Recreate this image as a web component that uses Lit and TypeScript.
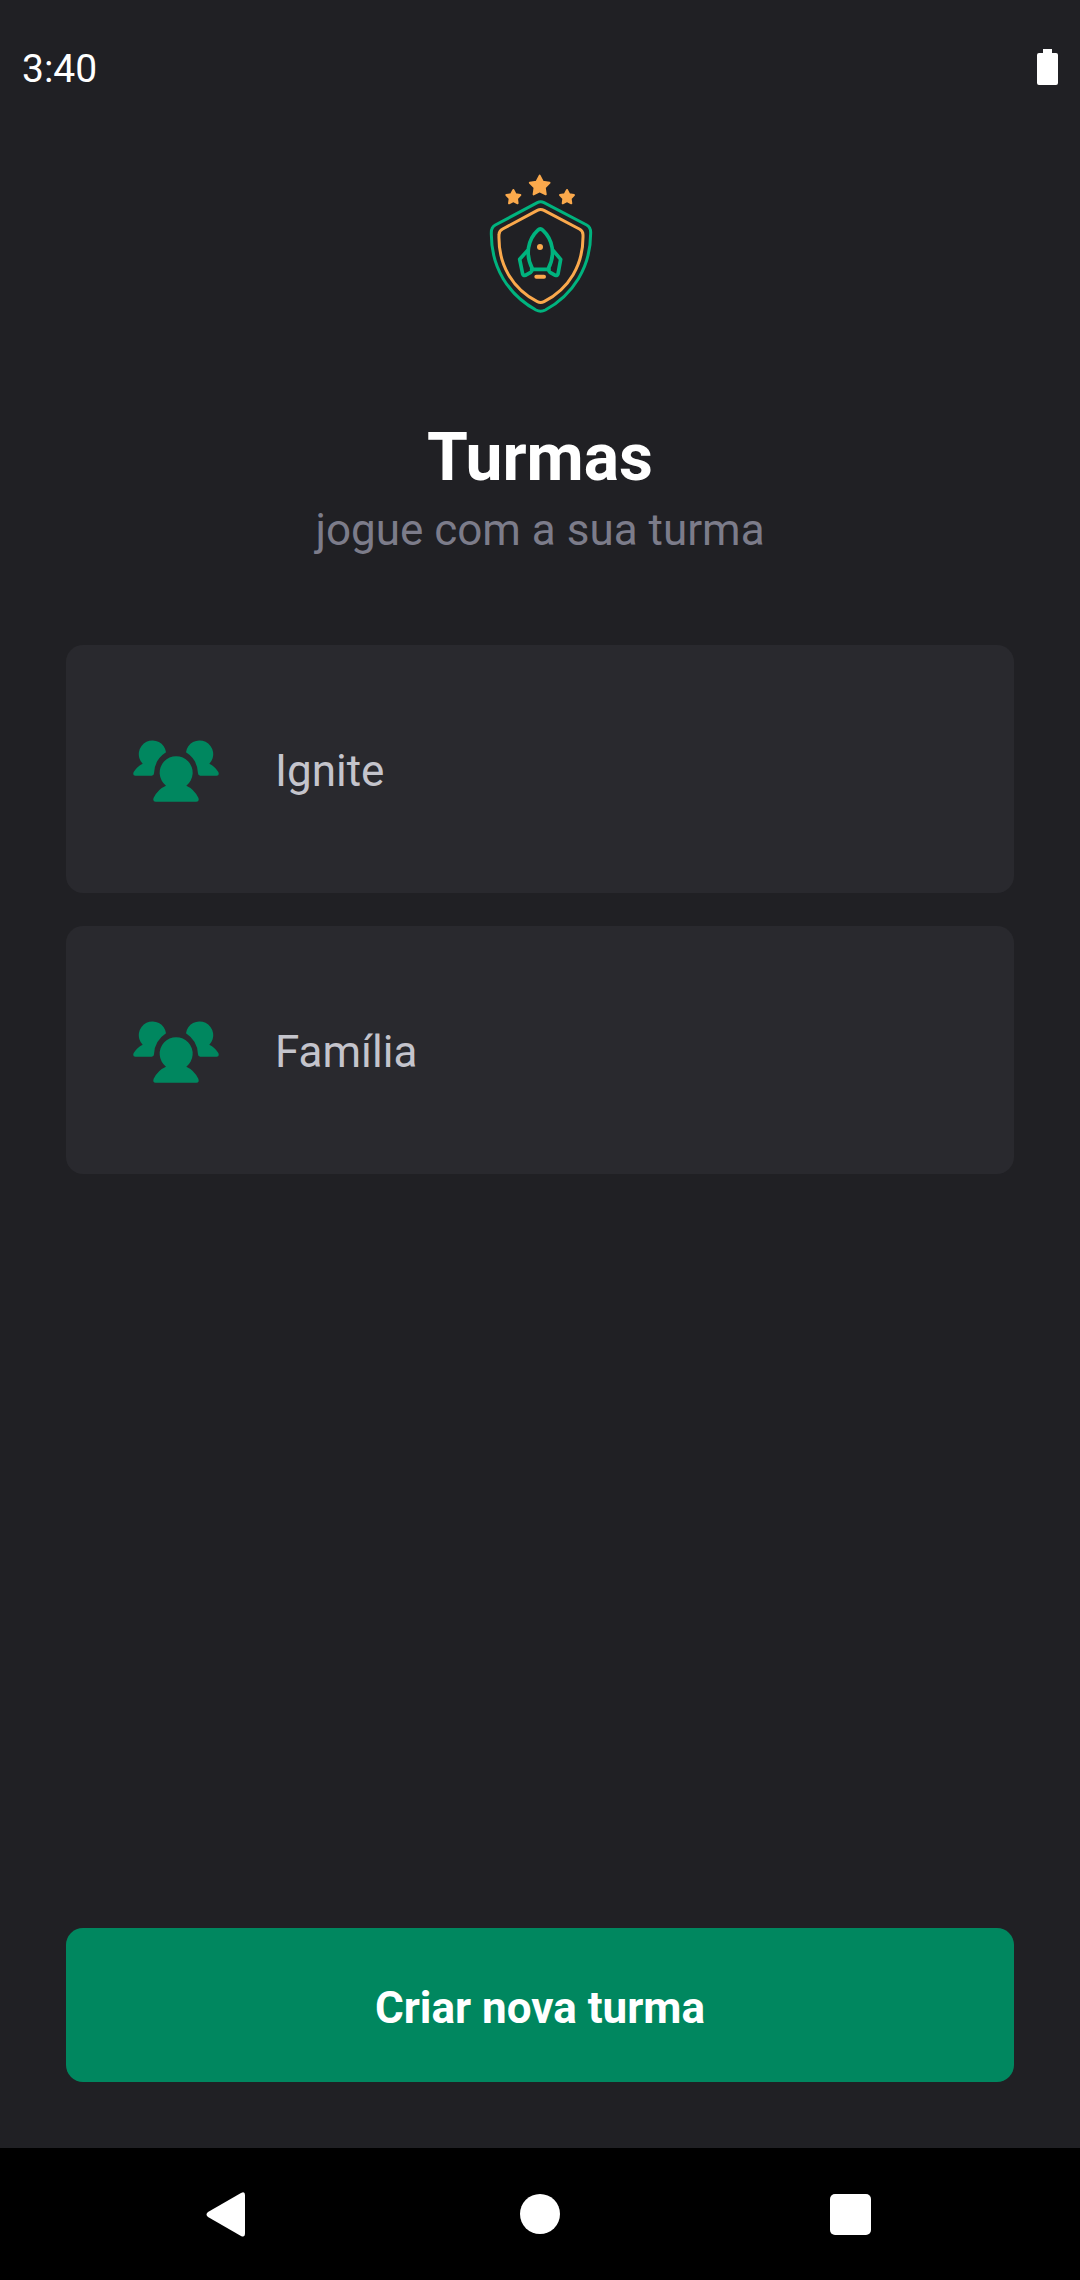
import { LitElement, html, css, svg } from "lit";
import { customElement, property, state } from "lit/decorators.js";

const star = (cx: number, cy: number, r: number) => {
  const points = Array.from({ length: 10 }, (_, i) => {
    const radius = i % 2 ? r * 0.52 : r;
    const angle = (Math.PI * i) / 5 - Math.PI / 2;
    return `${(cx + radius * Math.cos(angle)).toFixed(1)},${(cy + radius * Math.sin(angle)).toFixed(1)}`;
  }).join(" ");
  return svg`<polygon points=${points} fill="#fba94c" stroke="#fba94c" stroke-width="6" stroke-linejoin="round"></polygon>`;
};

@customElement("team-crest")
class TeamCrest extends LitElement {
  static styles = css`
    :host { display: block; }
    .crest { display: block; width: 140px; height: 165px; }
  `;

  render() {
    return html`
      <svg class="crest" viewBox="0 0 420 495" fill="none" stroke-linecap="round" stroke-linejoin="round" aria-hidden="true">
        ${star(209, 78, 31)} ${star(130, 112, 22)} ${star(291, 112, 22)}
        <path stroke="#00b37e" stroke-width="9" d="M202 128Q212 123 222 128L350 195Q362 202 362 217C363 322 308 405 226 450Q212 457 198 450C116 405 62 322 64 217Q64 202 76 195Z"/>
        <path stroke="#fba94c" stroke-width="9" d="M202 151Q212 146 222 151L328 207Q339 213 339 224C341 315 297 386 222 425Q212 430 202 425C128 386 84 315 87 224Q87 213 98 207Z"/>
        <g stroke="#00b37e" stroke-width="11">
          <path d="M203 211Q211 203 219 211C248 238 258 284 234 328H188C164 284 174 238 203 211Z"/>
          <path d="M172 272L149 298L158 342Q160 348 166 346L182 337Q187 333 185 328"/>
          <path d="M250 272L272 298L264 342Q262 348 256 346L240 337Q235 333 237 328"/>
        </g>
        <circle cx="210" cy="261" r="9" fill="#fba94c"/>
        <path stroke="#fba94c" stroke-width="12" d="M199 350H222"/>
      </svg>
    `;
  }
}

@customElement("group-card")
class GroupCard extends LitElement {
  @property() name = "";

  static styles = css`
    :host { display: block; }
    .card {
      display: flex;
      align-items: center;
      gap: 55px;
      width: 100%;
      min-height: 248px;
      padding: 0 66px;
      border: 0;
      border-radius: 17px;
      background: #29292e;
      color: #c4c4cc;
      font: 400 44px/60px Roboto, sans-serif;
      text-align: left;
      cursor: pointer;
    }
    .people { flex: none; width: 88px; height: 74px; fill: #00875f; }
    .name { padding-top: 4px; }
  `;

  render() {
    return html`
      <button class="card" type="button">
        <svg class="people" viewBox="36 37 264 222" aria-hidden="true">
          <path d="M138 198A49.500 49.500 0 1 1 199 198Q222 208 235 234Q239 246 229 246H107Q97 246 101 234Q114 208 138 198Z"/>
          <path d="M68 132A41 41 0 1 1 138 98Q103 121 102 161Q102 168 95 168H46Q37 168 41 157Q51 140 68 132Z"/>
          <path d="M268 132A41 41 0 1 0 198 98Q233 121 234 161Q234 168 241 168H290Q299 168 295 157Q285 140 268 132Z"/>
        </svg>
        <span class="name">${this.name}</span>
      </button>
    `;
  }
}

@customElement("app-root")
class AppRoot extends LitElement {
  @state() private groups = ["Ignite", "Família"];

  static styles = css`
    :host {
      display: flex;
      flex-direction: column;
      min-height: 100vh;
      background: #202024;
      color: #ffffff;
      font-family: Roboto, sans-serif;
    }
    .status {
      display: flex;
      align-items: center;
      justify-content: space-between;
      height: 138px;
      padding: 0 22px;
      font-size: 39px;
    }
    .battery { width: 21px; height: 36px; margin-bottom: 4px; fill: #ffffff; }
    .content {
      flex: 1;
      display: flex;
      flex-direction: column;
      padding: 22px 66px 66px;
    }
    .heading {
      display: flex;
      flex-direction: column;
      align-items: center;
      text-align: center;
    }
    .title { margin: 93px 0 0; font-size: 66px; line-height: 80px; font-weight: 700; }
    .subtitle { margin: 2px 0 0; font-size: 44px; line-height: 60px; color: #7c7c8a; }
    .groups {
      flex: 1;
      display: flex;
      flex-direction: column;
      gap: 33px;
      margin: 85px 0 66px;
      padding: 0;
      list-style: none;
    }
    .create {
      min-height: 154px;
      padding: 6px 0 0;
      border: 0;
      border-radius: 17px;
      background: #00875f;
      color: #ffffff;
      font: 700 44px/60px Roboto, sans-serif;
      cursor: pointer;
    }
    .system {
      display: flex;
      justify-content: center;
      height: 132px;
      background: #000000;
    }
    .key {
      display: flex;
      align-items: center;
      justify-content: center;
      flex: 0 1 312px;
      padding: 0;
      border: 0;
      background: none;
      cursor: pointer;
    }
    .glyph { width: 48px; height: 48px; fill: #ffffff; }
  `;

  render() {
    return html`
      <header class="status">
        <time>3:40</time>
        <svg class="battery" viewBox="0 0 21 36" aria-hidden="true">
          <path d="M6 0H15V4H19Q21 4 21 6V34Q21 36 19 36H2Q0 36 0 34V6Q0 4 2 4H6Z"/>
        </svg>
      </header>
      <main class="content">
        <div class="heading">
          <team-crest></team-crest>
          <h1 class="title">Turmas</h1>
          <p class="subtitle">jogue com a sua turma</p>
        </div>
        <ul class="groups">
          ${this.groups.map((name) => html`<li><group-card .name=${name}></group-card></li>`)}
        </ul>
        <button class="create" type="button">Criar nova turma</button>
      </main>
      <nav class="system">
        <button class="key" type="button" aria-label="Voltar">
          <svg class="glyph" viewBox="0 0 48 48"><path d="M4 22L37 3Q41 1 41 5V43Q41 48 37 46L4 27Q1 24.500 4 22Z"/></svg>
        </button>
        <button class="key" type="button" aria-label="Início">
          <svg class="glyph" viewBox="0 0 48 48"><circle cx="24" cy="24" r="20"/></svg>
        </button>
        <button class="key" type="button" aria-label="Recentes">
          <svg class="glyph" viewBox="0 0 48 48"><rect x="2" y="4" width="41" height="41" rx="5"/></svg>
        </button>
      </nav>
    `;
  }
}
